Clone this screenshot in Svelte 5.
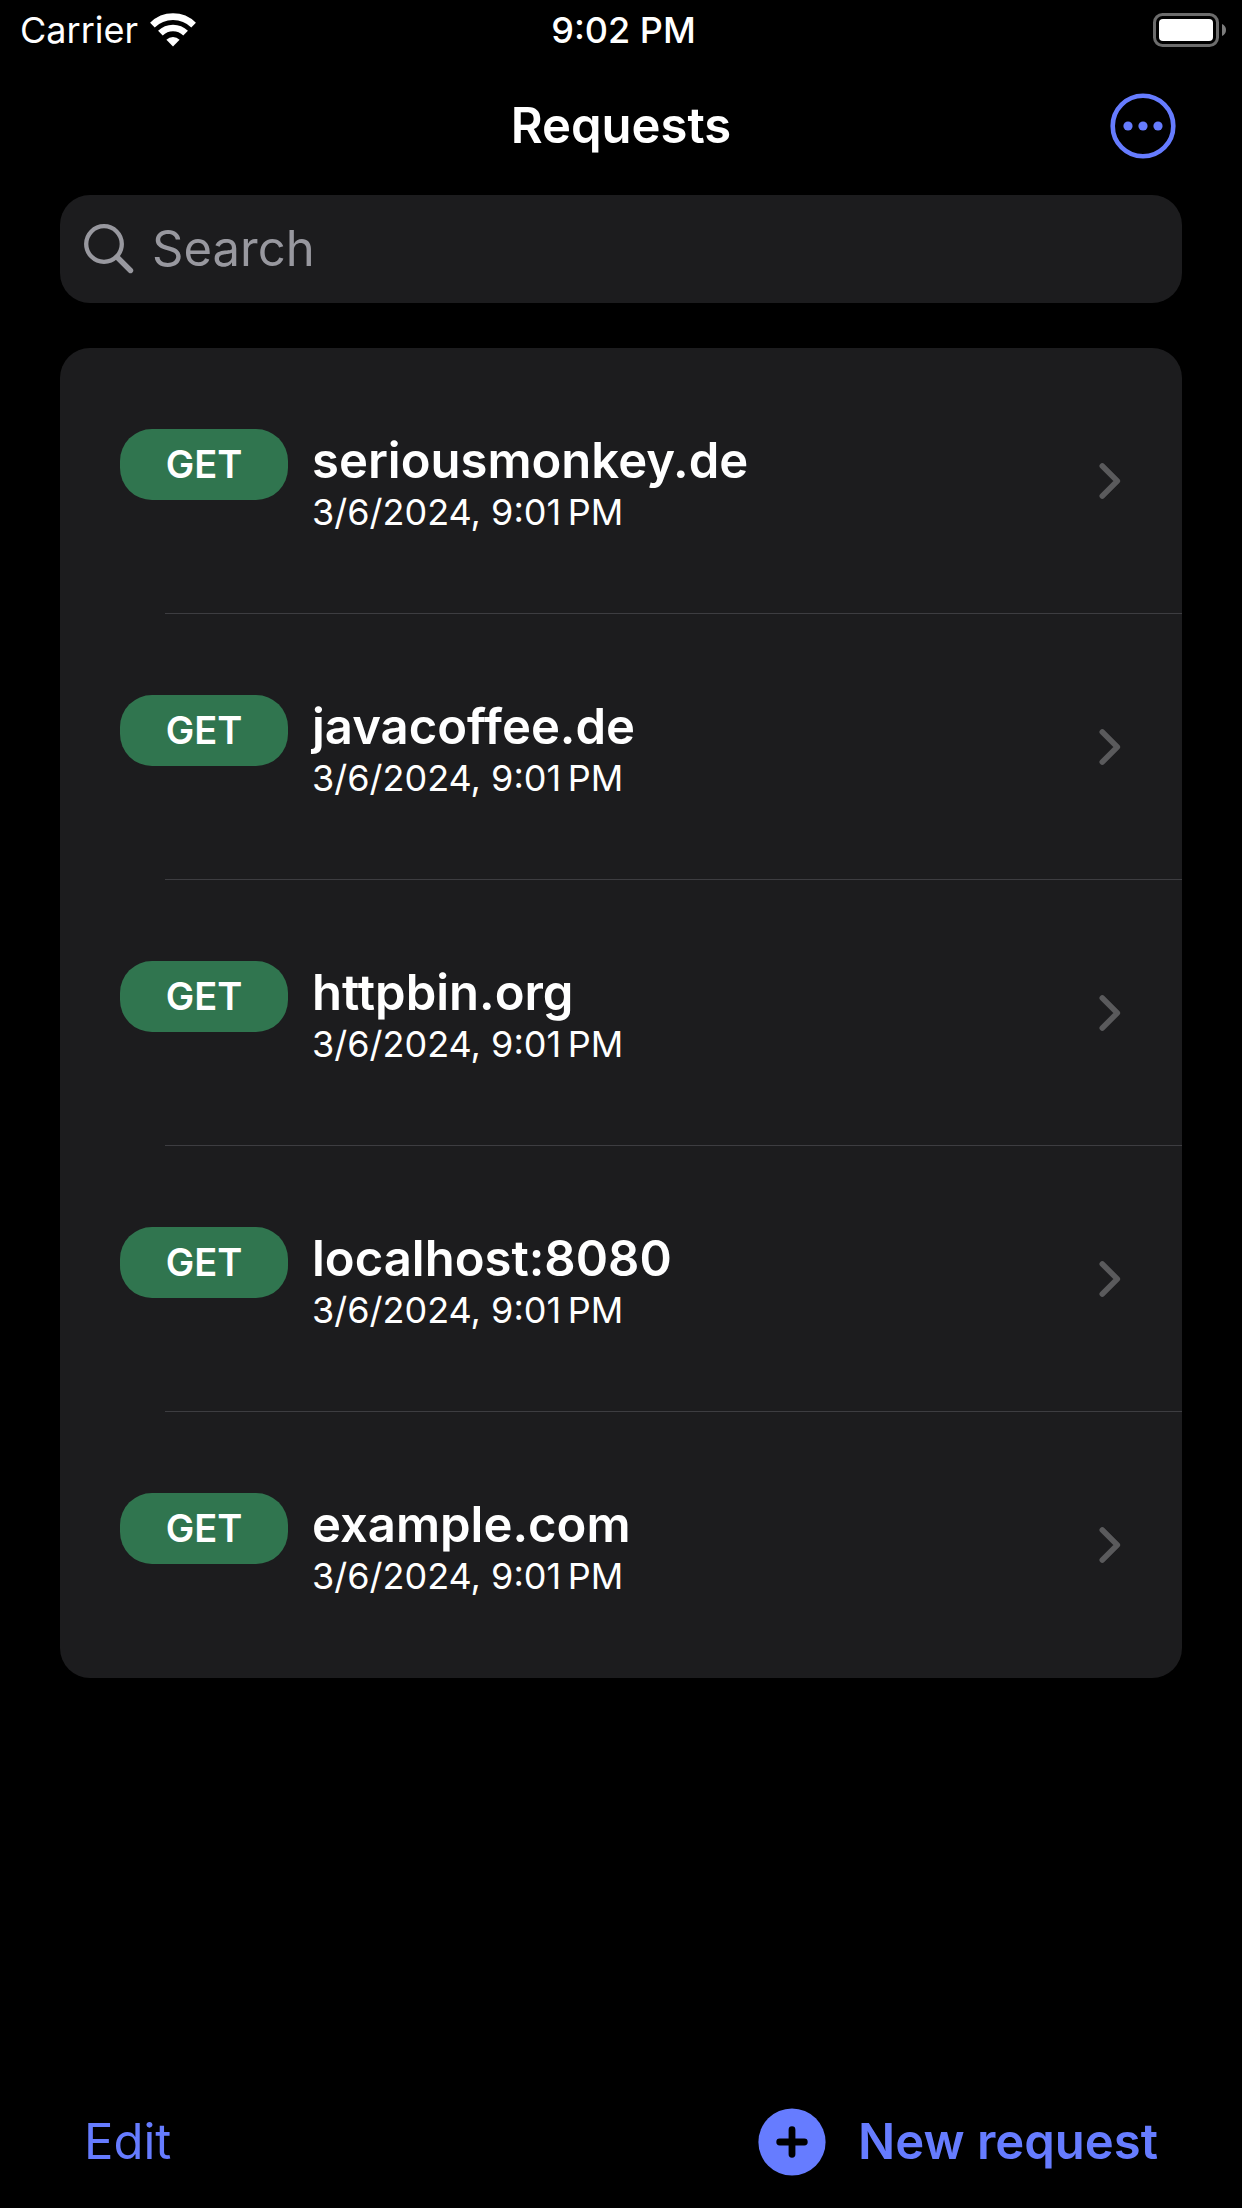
<script>
  let query = $state('')

  const requests = [
    { host: 'seriousmonkey.de', method: 'GET', date: '3/6/2024, 9:01\u202fPM' },
    { host: 'javacoffee.de', method: 'GET', date: '3/6/2024, 9:01\u202fPM' },
    { host: 'httpbin.org', method: 'GET', date: '3/6/2024, 9:01\u202fPM' },
    { host: 'localhost:8080', method: 'GET', date: '3/6/2024, 9:01\u202fPM' },
    { host: 'example.com', method: 'GET', date: '3/6/2024, 9:01\u202fPM' }
  ]

  let visible = $derived(requests.filter((r) => r.host.includes(query.trim().toLowerCase())))
</script>

<div class="app">
  <div class="status">
    <div class="carrier">
      <span>Carrier</span>
      <svg width="46" height="34" viewBox="0 0 46 34" aria-hidden="true">
        <g fill="none" stroke="#fff">
          <path d="M2.4 12.1A29.3 29.3 0 0 1 43.6 12.1" stroke-width="6.6" />
          <path d="M10.4 20.2A17.9 17.9 0 0 1 35.6 20.2" stroke-width="6.6" />
        </g>
        <path d="M23 33.4l-6.6-6.6a9.4 9.4 0 0 1 13.2 0z" fill="#fff" />
      </svg>
    </div>
    <span class="time">9:02 PM</span>
    <svg class="battery" width="74" height="34" viewBox="0 0 74 34" aria-hidden="true">
      <rect x="1.5" y="1.5" width="63" height="31" rx="8" fill="none" stroke="#6c6c6c" stroke-width="3" />
      <rect x="6" y="6" width="54" height="22" rx="4" fill="#fff" />
      <path d="M69 11c2.6 1 4 3.4 4 6s-1.4 5-4 6z" fill="#7c7c7c" />
    </svg>
  </div>

  <header>
    <h1>Requests</h1>
    <button class="more" aria-label="More">
      <svg width="66" height="66" viewBox="0 0 66 66" aria-hidden="true">
        <circle cx="33" cy="33" r="30.3" fill="none" stroke="currentColor" stroke-width="4.6" />
        <circle cx="18" cy="33" r="4.6" fill="currentColor" />
        <circle cx="33" cy="33" r="4.6" fill="currentColor" />
        <circle cx="48" cy="33" r="4.6" fill="currentColor" />
      </svg>
    </button>
  </header>

  <main>
    <label class="search">
      <svg width="50" height="50" viewBox="0 0 50 50" fill="none" stroke="currentColor" aria-hidden="true">
        <circle cx="20" cy="20" r="17.8" stroke-width="4.3" />
        <path d="M33 33l13.5 13.5" stroke-width="5.4" stroke-linecap="round" />
      </svg>
      <input type="text" placeholder="Search" aria-label="Search" bind:value={query} />
    </label>

    <ul>
      {#each visible as request}
        <li>
          <a href="#{request.host}">
            <span class="method">{request.method}</span>
            <span class="info">
              <strong>{request.host}</strong>
              <span class="date">{request.date}</span>
            </span>
            <svg width="22" height="38" viewBox="0 0 22 38" aria-hidden="true">
              <path d="M3.3 4L18.3 19L3.3 34" fill="none" stroke="#5a5a5c" stroke-width="5.6" stroke-linecap="round" stroke-linejoin="round" />
            </svg>
          </a>
        </li>
      {/each}
    </ul>
  </main>

  <footer>
    <button>Edit</button>
    <button class="new">
      <svg width="68" height="68" viewBox="0 0 68 68" aria-hidden="true">
        <circle cx="34" cy="34" r="33.6" fill="currentColor" />
        <path d="M34 21.7v24.6M21.7 34h24.6" stroke="#000" stroke-width="6.8" stroke-linecap="round" />
      </svg>
      New request
    </button>
  </footer>
</div>

<style>
  :global(body) {
    background: #000;
  }
  .app {
    display: flex;
    flex-direction: column;
    min-height: 100vh;
    background: #000;
    color: #fff;
    font-family: Inter, 'Liberation Sans', sans-serif;
    font-size: 49px;
    line-height: 60px;
  }
  svg {
    display: block;
    flex: none;
  }
  button {
    padding: 0;
    border: 0;
    background: none;
    color: #667cff;
    font: inherit;
    cursor: pointer;
  }
  .status,
  header {
    display: grid;
    grid-template-columns: 1fr auto 1fr;
    align-items: center;
  }
  .status {
    height: 60px;
    padding: 0 15px 0 20px;
    font-size: 36px;
  }
  .carrier {
    display: flex;
    align-items: center;
    gap: 12px;
  }
  .time {
    font-weight: 500;
  }
  .battery {
    justify-self: end;
  }
  header {
    height: 132px;
    padding: 0 66px;
  }
  h1 {
    grid-column: 2;
    margin: 0;
    font-size: 49px;
    font-weight: 600;
  }
  .more {
    justify-self: end;
  }
  main {
    display: flex;
    flex-direction: column;
    gap: 45px;
    padding: 3px 60px 60px;
  }
  .search {
    display: flex;
    align-items: center;
    gap: 18px;
    height: 108px;
    padding: 0 24px;
    box-sizing: border-box;
    border-radius: 30px;
    background: #1c1c1e;
    color: #98989f;
  }
  .search input {
    flex: 1;
    min-width: 0;
    padding: 0;
    border: 0;
    outline: 0;
    background: none;
    color: #fff;
    font: inherit;
  }
  .search input::placeholder {
    color: #98989f;
    opacity: 1;
  }
  ul {
    margin: 0;
    padding: 0;
    overflow: hidden;
    list-style: none;
    border-radius: 30px;
    background: #1c1c1e;
  }
  li::after {
    content: '';
    display: block;
    height: 1px;
    margin-left: 105px;
    background: #3d3d41;
  }
  li:last-child::after {
    background: none;
  }
  a {
    display: grid;
    grid-template-columns: auto 1fr auto;
    align-items: baseline;
    column-gap: 24px;
    padding: 81px 61px 80px 60px;
    color: inherit;
    text-decoration: none;
  }
  a svg {
    align-self: center;
  }
  .method {
    width: 168px;
    border-radius: 32px;
    background: #30754f;
    font-size: 38px;
    font-weight: 600;
    line-height: 71px;
    text-align: center;
  }
  .info {
    display: flex;
    flex-direction: column;
    min-width: 0;
  }
  strong {
    font-weight: 600;
  }
  .date {
    font-size: 36px;
    line-height: 42px;
  }
  footer {
    display: flex;
    align-items: center;
    justify-content: space-between;
    margin-top: auto;
    padding: 0 84px 32px;
  }
  .new {
    display: flex;
    align-items: center;
    gap: 32px;
    font-weight: 600;
  }
</style>
